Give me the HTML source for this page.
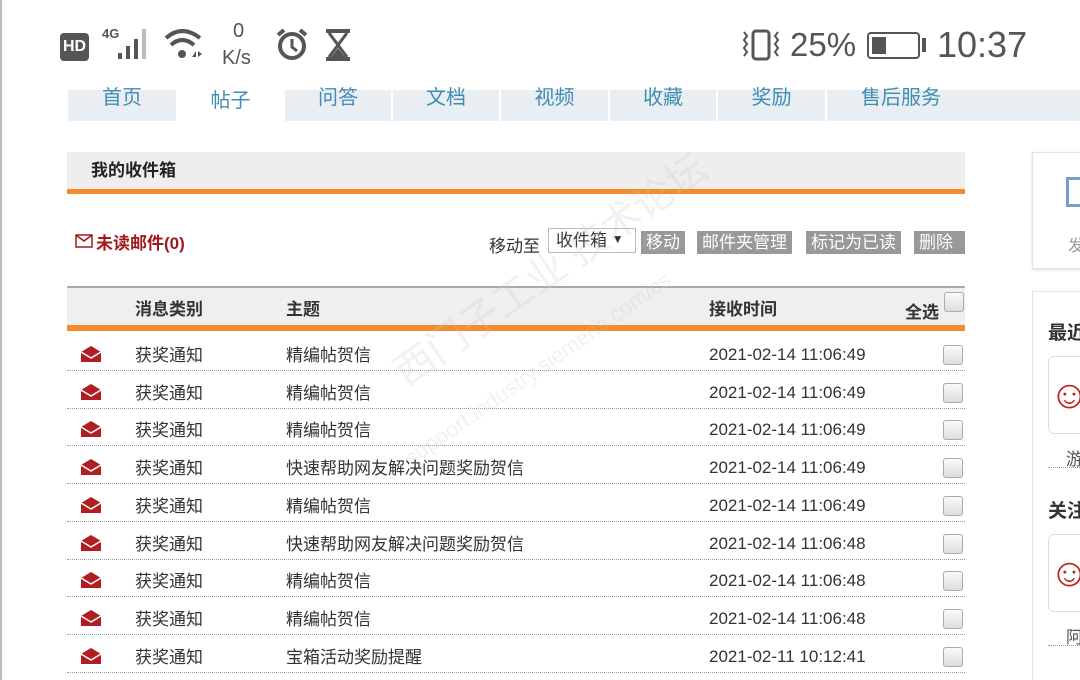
<!DOCTYPE html><html><head><meta charset="utf-8"><style>
*{margin:0;padding:0;box-sizing:border-box}
html,body{width:1080px;height:680px;overflow:hidden}
body{background:#fff;position:relative;font-family:"Liberation Sans","Noto Sans CJK SC",sans-serif;color:#333}
.a{position:absolute;white-space:nowrap}
.tab{position:absolute;top:90px;height:31px;background:#e9eef2;color:#3f8db5;font-size:20px;text-align:center;line-height:16px;border-right:2px solid #fff}
.row{position:absolute;left:67px;width:898px;height:38px;border-bottom:1px dotted #999;font-size:17px;color:#333}
.row span{position:absolute;top:8px}
.cb{position:absolute;width:20px;height:20px;border:1px solid #aaa;border-radius:3px;background:linear-gradient(#fafafa,#ddd)}
.btn{position:absolute;top:231px;height:23px;background:#999;color:#fff;font-size:17px;line-height:23px;padding:0 5px}
</style></head><body>
<div class="a" style="left:0;top:0;width:2px;height:680px;background:#bbb"></div>
<div class="a" style="left:60px;top:33px;width:29px;height:28px;background:#555;border-radius:4px;color:#fff;font-weight:bold;font-size:16px;line-height:28px;text-align:center">HD</div>
<div class="a" style="left:102px;top:26px;font-size:13px;font-weight:bold;color:#555">4G</div>
<svg class="a" style="left:116px;top:26px" width="40" height="36"><rect x="2" y="27" width="4" height="6" fill="#555"/><rect x="10" y="20" width="4" height="13" fill="#555"/><rect x="18" y="13" width="4" height="20" fill="#555"/><rect x="26" y="3" width="4" height="30" fill="#bbb"/></svg>
<svg class="a" style="left:162px;top:26px" width="46" height="36"><path d="M4 12 Q20 -2 38 12" stroke="#555" stroke-width="4" fill="none"/><path d="M9 19 Q20 9 32 19" stroke="#555" stroke-width="4" fill="none"/><circle cx="20" cy="28" r="4" fill="#555"/><path d="M30 31 l4 -6 v6z M36 25 v6 l4 -3z" fill="#555"/></svg>
<div class="a" style="left:233px;top:20px;font-size:20px;color:#555">0</div>
<div class="a" style="left:222px;top:47px;font-size:20px;color:#555">K/s</div>
<svg class="a" style="left:274px;top:27px" width="36" height="36"><circle cx="18" cy="19" r="12" stroke="#555" stroke-width="4" fill="none"/><path d="M18 12v8l5 4" stroke="#555" stroke-width="3" fill="none"/><path d="M4 8l6-5M32 8l-6-5" stroke="#555" stroke-width="4"/></svg>
<svg class="a" style="left:324px;top:29px" width="28" height="34"><rect x="2" y="0" width="24" height="4" fill="#555"/><rect x="2" y="28" width="24" height="4" fill="#555"/><path d="M5 4 L14 16 L5 28 M23 4 L14 16 L23 28" stroke="#555" stroke-width="3" fill="none"/><path d="M7 28 L14 19 L21 28z" fill="#555"/></svg>
<svg class="a" style="left:740px;top:28px" width="50" height="36"><path d="M4 4l3 4-3 4 3 4-3 4 3 4-3 4" stroke="#555" stroke-width="2" fill="none"/><rect x="13" y="3" width="16" height="28" rx="3" stroke="#555" stroke-width="3" fill="none"/><path d="M38 4l-3 4 3 4-3 4 3 4-3 4 3 4" stroke="#555" stroke-width="2" fill="none"/></svg>
<div class="a" style="left:790px;top:26px;font-size:33px;color:#555">25%</div>
<div class="a" style="left:867px;top:32px;width:53px;height:27px;border:2px solid #555;border-radius:4px"><div style="margin:3px;width:14px;height:17px;background:#555"></div></div>
<div class="a" style="left:922px;top:38px;width:4px;height:14px;background:#555"></div>
<div class="a" style="left:937px;top:24px;font-size:36px;color:#555">10:37</div>
<div class="tab" style="left:68px;width:110px">首页</div>
<div class="tab" style="left:178px;width:107px;background:#fff;line-height:22px">帖子</div>
<div class="tab" style="left:285px;width:108px">问答</div>
<div class="tab" style="left:393px;width:108px">文档</div>
<div class="tab" style="left:501px;width:109px">视频</div>
<div class="tab" style="left:610px;width:108px">收藏</div>
<div class="tab" style="left:718px;width:109px">奖励</div>
<div class="tab" style="left:827px;width:253px;text-align:left;padding-left:34px;border:none">售后服务</div>
<div class="a" style="left:67px;top:152px;width:898px;height:37px;background:#eee;font-size:17px;font-weight:bold;line-height:37px;padding-left:24px;color:#222">我的收件箱</div>
<div class="a" style="left:67px;top:189px;width:898px;height:5px;background:#f68b2c"></div>
<svg class="a" style="left:75px;top:234px" width="18" height="14"><rect x="1" y="1" width="16" height="12" stroke="#a0191e" stroke-width="1.5" fill="none"/><path d="M1 1l8 6 8-6" stroke="#a0191e" stroke-width="1.5" fill="none"/></svg>
<div class="a" style="left:96px;top:229px;font-size:17px;font-weight:bold;color:#a0191e">未读邮件(0)</div>
<div class="a" style="left:489px;top:232px;font-size:17px">移动至</div>
<div class="a" style="left:548px;top:228px;width:88px;height:25px;border:1px solid #bbb;font-size:17px;padding-left:7px;line-height:24px">收件箱 <span style="font-size:12px;position:relative;top:-3px">▼</span></div>
<div class="btn" style="left:641px">移动</div>
<div class="btn" style="left:697px">邮件夹管理</div>
<div class="btn" style="left:806px">标记为已读</div>
<div class="btn" style="left:914px;width:51px">删除</div>
<div class="a" style="left:67px;top:286px;width:898px;height:39px;background:#efefef;border-top:2px solid #aaa;font-size:17px;font-weight:bold;color:#333">
<span class="a" style="left:68px;top:7px">消息类别</span><span class="a" style="left:219px;top:7px">主题</span><span class="a" style="left:642px;top:7px">接收时间</span><span class="a" style="left:838px;top:10px">全选</span></div>
<div class="cb" style="left:944px;top:292px"></div>
<div class="a" style="left:67px;top:325px;width:898px;height:6px;background:#f68b2c"></div>
<div id="rows"></div>
<div class="a" style="left:380px;top:350px;transform:rotate(-35deg);transform-origin:left top;color:rgba(200,200,200,.25);font-size:40px">西门子工业 技术论坛</div>
<div class="a" style="left:400px;top:450px;transform:rotate(-35deg);transform-origin:left top;color:rgba(200,200,200,.25);font-size:22px">support.industry.siemens.com/cs</div>
<div class="a" style="left:1032px;top:152px;width:60px;height:117px;border:1px solid #e2e2e2;box-shadow:0 1px 3px #ddd"></div>
<div class="a" style="left:1066px;top:177px;width:20px;height:30px;border:3px solid #7a9ccf"></div>
<div class="a" style="left:1068px;top:232px;font-size:16px;color:#999">发</div>
<div class="a" style="left:1032px;top:291px;width:60px;height:400px;border:1px solid #e2e2e2"></div>
<div class="a" style="left:1048px;top:318px;font-size:19px;font-weight:bold;color:#333">最近</div>
<div class="a" style="left:1048px;top:356px;width:40px;height:78px;border:1px solid #ddd;border-radius:6px;color:#b22;font-size:40px;line-height:76px;overflow:hidden">☺</div>
<div class="a" style="left:1066px;top:445px;font-size:17px;color:#555">游</div>
<div class="a" style="left:1048px;top:467px;width:40px;border-top:1px dotted #999"></div>
<div class="a" style="left:1048px;top:496px;font-size:19px;font-weight:bold;color:#333">关注</div>
<div class="a" style="left:1048px;top:534px;width:40px;height:78px;border:1px solid #ddd;border-radius:6px;color:#b22;font-size:40px;line-height:76px;overflow:hidden">☺</div>
<div class="a" style="left:1066px;top:623px;font-size:17px;color:#555">阿</div>
<div class="a" style="left:1048px;top:645px;width:40px;border-top:1px dotted #999"></div>
<script>
var d=[["精编帖贺信","2021-02-14 11:06:49"],["精编帖贺信","2021-02-14 11:06:49"],["精编帖贺信","2021-02-14 11:06:49"],["快速帮助网友解决问题奖励贺信","2021-02-14 11:06:49"],["精编帖贺信","2021-02-14 11:06:49"],["快速帮助网友解决问题奖励贺信","2021-02-14 11:06:48"],["精编帖贺信","2021-02-14 11:06:48"],["精编帖贺信","2021-02-14 11:06:48"],["宝箱活动奖励提醒","2021-02-11 10:12:41"]];
var h="";d.forEach(function(r,i){var t=333+i*37.7;
h+='<div class="row" style="top:'+t+'px"><svg class="a" style="left:13px;top:12px" width="22" height="18"><path d="M1 7 L11 1 L21 7 V17 H1Z" fill="#b01d22"/><path d="M1 7 L11 13 L21 7" stroke="#fff" stroke-width="1.5" fill="none"/></svg><span style="left:68px">获奖通知</span><span style="left:219px">'+r[0]+'</span><span style="left:642px;top:12px">'+r[1]+'</span></div><div class="cb" style="left:943px;top:'+(t+12)+'px"></div>';});
document.getElementById("rows").innerHTML=h;
</script>
</body></html>
